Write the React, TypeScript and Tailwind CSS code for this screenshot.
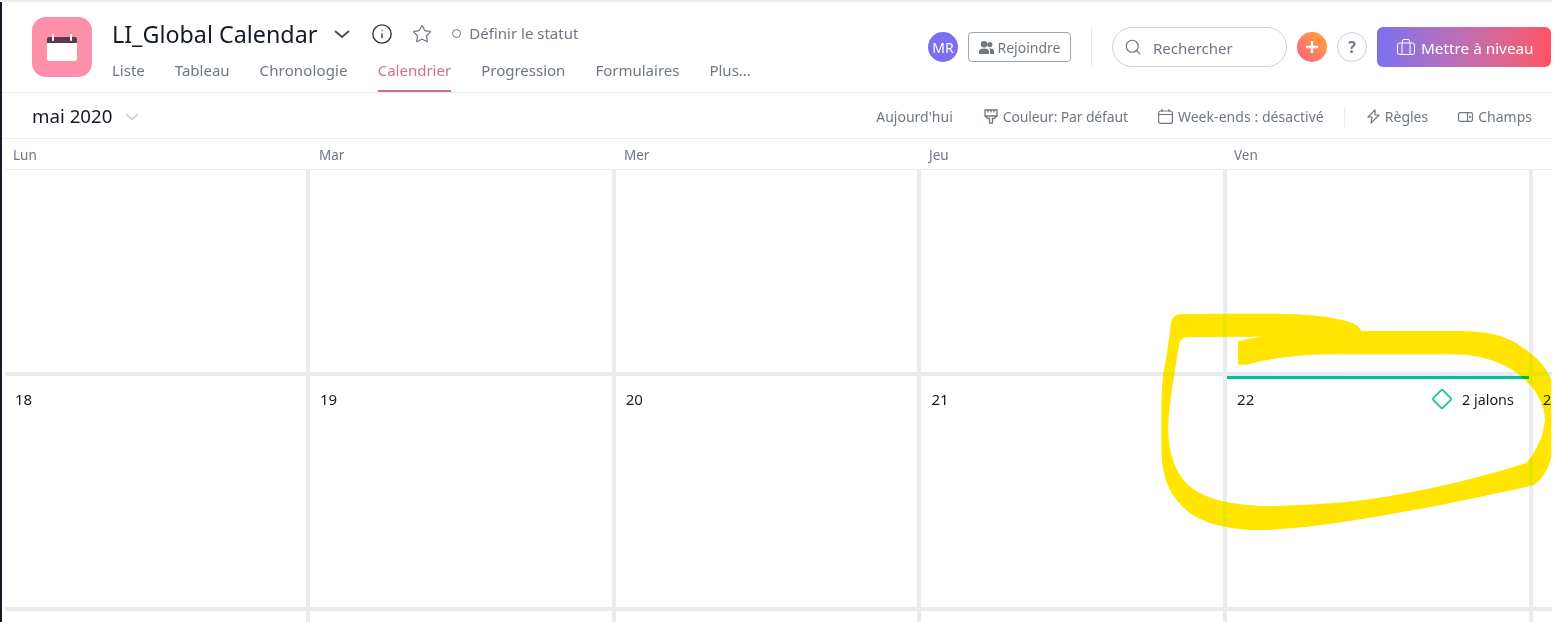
import { Info, Search, Star } from 'lucide-react'

const tabs = ['Liste', 'Tableau', 'Chronologie', 'Calendrier', 'Progression', 'Formulaires', 'Plus...']
const days = ['Lun', 'Mar', 'Mer', 'Jeu', 'Ven']

const Chevron = ({ className }: { className: string }) => (
  <svg viewBox="0 0 16 9" className={className} fill="none" stroke="currentColor" strokeWidth="2">
    <path d="M1 1l7 6 7-6" />
  </svg>
)

const tabClass = (t: string) => {
  if (t === 'Calendrier') return 'h-[35px] border-b-2 border-[#cf6f88] pt-[3px] text-[15px] leading-[20px] text-[#cf6f88]'
  if (t === 'Chronologie') return 'h-[35px] pt-[3px] text-[15px] leading-[20px] tracking-[0.14px] text-[#6f7782]'
  return 'h-[35px] pt-[3px] text-[15px] leading-[20px] text-[#6f7782]'
}

const Header = () => (
  <header className="flex h-[91px] shrink-0 items-start border-b border-[#e8ecee] pl-[30px]">
    <div className="mt-[15px] flex h-[60px] w-[60px] items-center justify-center rounded-[14px] bg-[#fd8fab]">
      <svg viewBox="0 0 30 27" className="h-[27px] w-[30px]">
        <path d="M2 3h26a2 2 0 012 2v5H0V5a2 2 0 012-2z" fill="#5b3a4e" />
        <path d="M0 9h30v16a2 2 0 01-2 2H2a2 2 0 01-2-2z" fill="#fff" />
        <rect x="5" y="0" width="2" height="7" rx="1" fill="#fff" />
        <rect x="23" y="0" width="2" height="7" rx="1" fill="#fff" />
      </svg>
    </div>
    <div className="ml-[20px]">
      <div className="mt-[15px] flex h-[34px] items-center">
        <h1 className="text-[23.3px] leading-[34px] text-[#151b26]">LI_Global Calendar</h1>
        <Chevron className="ml-[17px] h-[9px] w-[16px] text-[#475066]" />
        <Info className="ml-[21px] h-[22px] w-[22px] text-[#273240]" strokeWidth={1.5} />
        <Star className="ml-[19px] h-[20px] w-[20px] text-[#6f7782]" strokeWidth={1.5} />
        <span className="ml-[20px] h-[9px] w-[9px] -translate-y-px rounded-full border border-[#6f7782]" />
        <span className="ml-[8px] -translate-y-px text-[15px] text-[#6f7782]">Définir le statut</span>
      </div>
      <nav className="mt-[6px] flex gap-[30px]">
        {tabs.map((t) => (
          <span key={t} className={tabClass(t)}>
            {t}
          </span>
        ))}
      </nav>
    </div>
    <div className="ml-auto mr-[1px] mt-[25px] flex h-[40px] items-center">
      <span className="flex h-[30px] w-[30px] items-center justify-center rounded-full bg-[#7a6ff0] text-[14px] text-white">
        MR
      </span>
      <button className="ml-[10px] flex h-[30px] w-[103px] items-center justify-center gap-[4px] rounded-[4px] border border-[#9ca6af] text-[14px] text-[#6f7782]">
        <svg viewBox="0 0 15 13" className="h-[13px] w-[15px]" fill="#6f7782">
          <circle cx="5" cy="3.2" r="3.2" />
          <circle cx="10.8" cy="3.6" r="2.6" />
          <path d="M0 13V10.5C0 8.4 2 7.4 5 7.4s5 1 5 3.1V13z" />
          <path d="M11 13V10.2c0-1.2-.5-2.1-1.3-2.7.4-.1.8-.1 1.3-.1 2.3 0 4 .9 4 2.8V13z" />
        </svg>
        Rejoindre
      </button>
      <span className="ml-[20px] h-[40px] w-px bg-[#e8ecee]" />
      <div className="ml-[20px] flex h-[40px] w-[175px] items-center rounded-full border border-[#cbd4db] pl-[11px] text-[15px] text-[#6f7782]">
        <Search className="h-[18px] w-[18px]" strokeWidth={1.5} />
        <span className="ml-[11px] translate-y-px">Rechercher</span>
      </div>
      <span className="ml-[10px] flex h-[30px] w-[30px] items-center justify-center rounded-full bg-gradient-to-tr from-[#fc5c7d] to-[#ffa41c] text-white">
        <svg viewBox="0 0 14 14" className="h-[14px] w-[14px]" stroke="currentColor" strokeWidth="2.4">
          <path d="M7 1v12M1 7h12" />
        </svg>
      </span>
      <span className="ml-[10px] flex h-[30px] w-[30px] items-center justify-center rounded-full border border-[#cbd4db] text-[16px] font-bold leading-[24px] text-[#6f7782]">
        ?
      </span>
      <button className="ml-[10px] flex h-[40px] w-[174px] items-center gap-[6px] rounded-md bg-gradient-to-r from-[#7a6ff0] to-[#ff5263] pl-[20px] text-[15.3px] text-white">
        <svg viewBox="0 0 18 16" className="h-[16px] w-[18px]" fill="none" stroke="currentColor" strokeWidth="1">
          <rect x="0.5" y="4" width="17" height="11.5" rx="2" />
          <path d="M5 15.5V4M13 15.5V4M5.5 4V2a1.5 1.5 0 011.5-1.5h4A1.5 1.5 0 0112.5 2v2" />
        </svg>
        <span className="translate-y-px">Mettre à niveau</span>
      </button>
    </div>
  </header>
)

const Toolbar = () => (
  <div className="flex h-[46px] shrink-0 items-center border-b border-[#e8ecee] pl-[30px] pr-[20px] pt-[2px] text-[14px] text-[#6f7782]">
    <span className="text-[18.7px] text-[#151b26]">mai 2020</span>
    <Chevron className="ml-[12px] h-[8px] w-[16px] text-[#cbd4db]" />
    <span className="ml-auto">Aujourd'hui</span>
    <svg viewBox="0 0 14 15" className="ml-[31px] h-[15px] w-[14px]" fill="none" stroke="currentColor" strokeWidth="1.3">
      <path d="M1 1h12v6H1zM4 1v2.5M7 1v2.5M10 1v2.5M1 7l3 2.5h1.5V14h3V9.5H10L13 7" />
    </svg>
    <span className="ml-[5px] tracking-[-0.15px]">Couleur: Par défaut</span>
    <svg viewBox="0 0 15 15" className="ml-[30px] h-[15px] w-[15px]" fill="none" stroke="currentColor" strokeWidth="1.2">
      <rect x="0.6" y="2" width="13.8" height="12.4" rx="2" />
      <path d="M0.6 5.5h13.8M4 0v3M11 0v3" />
    </svg>
    <span className="ml-[5px] tracking-[0.05px]">Week-ends : désactivé</span>
    <span className="ml-[20px] h-[20px] w-px bg-[#e8ecee]" />
    <svg viewBox="0 0 13 15" className="ml-[22px] h-[15px] w-[13px]" fill="none" stroke="currentColor" strokeWidth="1.2" strokeLinejoin="round">
      <path d="M8 0.8L1 8h4l-1 6 8-8H8z" />
    </svg>
    <span className="ml-[5px]">Règles</span>
    <svg viewBox="0 0 15 10" className="ml-[30px] h-[10px] w-[15px]" fill="none" stroke="currentColor" strokeWidth="1.2">
      <rect x="0.6" y="0.6" width="13.8" height="8.8" rx="1.5" />
      <path d="M9.5 0.6v8.8" />
      <circle cx="12" cy="5" r="0.5" />
    </svg>
    <span className="ml-[5px]">Champs</span>
  </div>
)

const Cell = ({ n, last }: { n?: string; last?: boolean }) => (
  <div className={last ? 'border-b-4 border-[#e8ecee]' : 'border-b-4 border-r-4 border-[#e8ecee]'}>
    {n && <div className="pl-[10px] pt-[13px] text-[15px] leading-[20px] text-[#151b26]">{n}</div>}
  </div>
)

const FridayCell = () => (
  <div className="border-b-4 border-r-4 border-[#e8ecee]">
    <div className="h-[3px] bg-[#00bf9c]" />
    <div className="flex items-center pl-[10px] pr-[15px] pt-[9px] text-[15px] leading-[20px] text-[#151b26]">
      22
      <svg viewBox="0 0 22 22" className="ml-auto h-[22px] w-[22px]" fill="none" stroke="#14c4a2" strokeWidth="1.8">
        <rect x="4.2" y="4.2" width="13.6" height="13.6" rx="1.5" transform="rotate(45 11 11)" />
      </svg>
      <span className="ml-[9px] translate-y-px text-[14.3px]">2 jalons</span>
    </div>
  </div>
)

const Scribble = () => (
  <svg viewBox="0 0 1212 720" className="absolute left-[1150px] top-[300px] h-[240px] w-[404px] mix-blend-darken">
    <path
      fill="#ffe500"
      d="M633 93C628 72 600 60 500 47C440 41 350 40 100 42C75 43 66 52 62 72C58 120 50 170 40 220C34 270 33 340 35 470C40 540 60 590 120 640C160 668 220 685 300 690C400 692 530 675 650 655C790 632 950 600 1150 556C1175 540 1195 510 1204 470L1204 240C1185 190 1145 160 1100 130C1060 105 1000 93 930 93ZM264 124L264 194L290 194C340 180 420 165 550 163L900 163C980 163 1040 180 1090 212C1150 250 1185 310 1185 360C1180 410 1160 450 1130 488C1000 530 820 575 640 600C540 612 430 618 330 618C230 612 160 595 115 555C70 510 55 450 55 380C56 320 68 260 75 210L88 130C90 118 100 112 120 111L340 110C310 113 285 118 264 124Z"
    />
  </svg>
)

export default function App() {
  return (
    <div className="relative flex h-[622px] w-[1554px] overflow-hidden bg-white font-['Noto_Sans',sans-serif]">
      <div className="mt-[2px] w-[2px] shrink-0 bg-[#151b26]" />
      <main className="flex w-[1550px] flex-col">
        <div className="h-[2px] shrink-0 bg-[#e8ecee]" />
        <Header />
        <Toolbar />
        <div className="ml-[3px] grid h-[31px] shrink-0 grid-cols-[306px_305px_305px_305px_1fr] items-center border-b border-[#e8ecee] pt-[2px] text-[13.5px] text-[#6f7782]">
          {days.map((d) => (
            <span key={d} className="pl-[8px]">
              {d}
            </span>
          ))}
        </div>
        <div className="ml-[3px] grid grid-cols-[305px_repeat(4,305.7px)_1fr] grid-rows-[206px_235px_20px]">
          {[0, 1, 2, 3, 4, 5].map((i) => (
            <Cell key={i} last={i === 5} />
          ))}
          <Cell n="18" />
          <Cell n="19" />
          <Cell n="20" />
          <Cell n="21" />
          <FridayCell />
          <Cell n="2" last />
          {[0, 1, 2, 3, 4, 5].map((i) => (
            <Cell key={i} last={i === 5} />
          ))}
        </div>
      </main>
      <Scribble />
    </div>
  )
}
